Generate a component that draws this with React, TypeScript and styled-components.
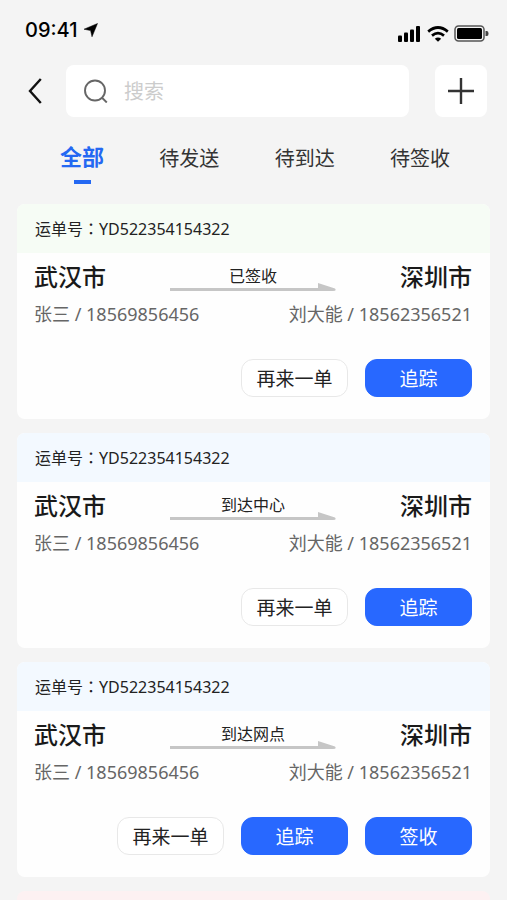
import React, { useState } from "react";
import styled, { createGlobalStyle } from "styled-components";

const GlobalStyle = createGlobalStyle`
  *, *::before, *::after { box-sizing: border-box; }
  body {
    margin: 0;
    background: #f4f4f4;
    color: #222;
    font-family: "Noto Sans", "Noto Sans CJK SC", sans-serif;
  }
  button, input { font: inherit; color: inherit; }
  button { cursor: pointer; border: 0; background: none; padding: 0; }
`;

const Screen = styled.div`
  height: 100vh;
  overflow: hidden;
  display: flex;
  flex-direction: column;
  background: #f4f4f4;
`;

const StatusBar = styled.div`
  flex: none;
  display: flex;
  align-items: center;
  justify-content: space-between;
  height: 65px;
  padding: 0 18px 5px 25px;
`;

const Clock = styled.div`
  display: flex;
  align-items: center;
  gap: 7px;
  font-family: Inter, sans-serif;
  font-size: 20px;
  line-height: 24px;
  font-weight: 500;
  color: #000;
`;

const Indicators = styled.div`
  display: flex;
  align-items: center;
  gap: 5px;
  padding-top: 7px;
`;

const SearchRow = styled.header`
  flex: none;
  display: flex;
  align-items: center;
  padding: 0 20px 0 17px;
`;

const BackButton = styled.button`
  display: flex;
  align-items: center;
  justify-content: center;
  width: 36px;
  height: 52px;
  margin-right: 13px;
`;

const SearchField = styled.label`
  flex: 1;
  min-width: 0;
  display: flex;
  align-items: center;
  gap: 16px;
  height: 52px;
  padding: 0 18px;
  border-radius: 8px;
  background: #fff;
`;

const SearchInput = styled.input`
  flex: 1;
  min-width: 0;
  padding: 2px 0 0;
  border: 0;
  outline: 0;
  background: transparent;
  font-size: 20px;
  line-height: 28px;
  &::placeholder { color: #ccc; opacity: 1; }
`;

const AddButton = styled.button`
  display: flex;
  align-items: center;
  justify-content: center;
  width: 52px;
  height: 52px;
  margin-left: 26px;
  border-radius: 8px;
  background: #fff;
`;

const Tabs = styled.nav`
  flex: none;
  display: flex;
  justify-content: space-between;
  padding: 23px 57px 20px 60px;
`;

const Tab = styled.button<{ $active: boolean }>`
  display: flex;
  flex-direction: column;
  align-items: center;
  justify-content: space-between;
  height: 44px;
  font-size: ${(p) => (p.$active ? 22 : 20)}px;
  font-weight: ${(p) => (p.$active ? 700 : 400)};
  line-height: ${(p) => (p.$active ? 32 : 38)}px;
  color: ${(p) => (p.$active ? "#2468f2" : "#333")};
  &::after {
    content: "";
    width: 17px;
    height: 4px;
    background: ${(p) => (p.$active ? "#2468f2" : "transparent")};
  }
`;

const List = styled.main`
  flex: 1;
  min-height: 0;
  overflow: hidden;
  display: flex;
  flex-direction: column;
  gap: 14px;
  padding: 0 17px;
`;

const Card = styled.article`
  flex: none;
  overflow: hidden;
  border-radius: 8px;
  background: #fefefe;
`;

const tones = { green: "#f6fcf5", blue: "#f3f9ff", red: "#fdf1f2" };
type Tone = keyof typeof tones;

const CardHeader = styled.div<{ $tone: Tone }>`
  height: 49px;
  padding: 12px 17px 0 18px;
  font-size: 16px;
  line-height: 24px;
  background: ${(p) => tones[p.$tone]};
`;

const Colon = styled.span`
  font-family: "Noto Sans CJK TC", sans-serif;
`;

const CardBody = styled.div`
  padding: 6px 18px 22px 17px;
`;

const Route = styled.div`
  display: flex;
  align-items: center;
  justify-content: space-between;
`;

const City = styled.strong`
  font-size: 24px;
  line-height: 36px;
  font-weight: 500;
  color: #1a1a1a;
`;

const Progress = styled.div`
  width: 166px;
  display: flex;
  flex-direction: column;
  align-items: center;
  font-size: 16px;
  line-height: 24px;
  svg { display: block; margin-top: -5px; }
`;

const Contacts = styled.div`
  display: flex;
  justify-content: space-between;
  padding-top: 5px;
  font-size: 18px;
  line-height: 28px;
  color: #666;
`;

const Actions = styled.div`
  display: flex;
  justify-content: flex-end;
  gap: 17px;
  padding-top: 31px;
`;

const ActionButton = styled.button<{ $primary: boolean }>`
  width: 107px;
  height: 38px;
  padding-top: 1px;
  border: 1px solid ${(p) => (p.$primary ? "#2868ff" : "#e8e8e8")};
  border-radius: 12px;
  font-size: 19px;
  line-height: 28px;
  background: ${(p) => (p.$primary ? "#2868ff" : "#fff")};
  color: ${(p) => (p.$primary ? "#fff" : "#222")};
`;

type Shipment = { id: number; tone: Tone; status: string; actions: string[] };

const shipments: Shipment[] = [
  { id: 1, tone: "green", status: "已签收", actions: ["再来一单", "追踪"] },
  { id: 2, tone: "blue", status: "到达中心", actions: ["再来一单", "追踪"] },
  { id: 3, tone: "blue", status: "到达网点", actions: ["再来一单", "追踪", "签收"] },
];

const tabs = ["全部", "待发送", "待到达", "待签收"];

function ShipmentCard({ tone, status, actions }: Shipment) {
  return (
    <Card>
      <CardHeader $tone={tone}>
        运单号<Colon>：</Colon>YD522354154322
      </CardHeader>
      <CardBody>
        <Route>
          <City>武汉市</City>
          <Progress>
            {status}
            <svg width="166" height="8" viewBox="0 0 166 8" aria-hidden="true">
              <path d="M0 5H148V0L165 5.5Q167 8 163 8H0Z" fill="#c6c6c6" />
            </svg>
          </Progress>
          <City>深圳市</City>
        </Route>
        <Contacts>
          <span>张三 / 18569856456</span>
          <span>刘大能 / 18562356521</span>
        </Contacts>
        <Actions>
          {actions.map((a) => (
            <ActionButton key={a} type="button" $primary={a !== "再来一单"}>
              {a}
            </ActionButton>
          ))}
        </Actions>
      </CardBody>
    </Card>
  );
}

export default function App() {
  const [active, setActive] = useState(tabs[0]);
  return (
    <>
      <GlobalStyle />
      <Screen>
        <StatusBar>
          <Clock>
            09:41
            <svg width="14" height="14" viewBox="0 0 14 14" aria-hidden="true">
              <path d="M13.5 .5L0 6.2L6.6 7.6L8 13.8Z" fill="#000" stroke="#000" strokeWidth=".5" />
            </svg>
          </Clock>
          <Indicators>
            <svg width="24" height="17" viewBox="0 0 24 17" aria-hidden="true">
              <rect x="0" y="10.5" width="4" height="6.5" rx="1" />
              <rect x="6" y="7.5" width="4" height="9.5" rx="1" />
              <rect x="12" y="4.5" width="4" height="12.5" rx="1" />
              <rect x="18" y="1" width="4" height="16" rx="1" />
            </svg>
            <svg width="22" height="16" viewBox="0 0 22 16" fill="none" stroke="#000" strokeWidth="2.7" aria-hidden="true">
              <path d="M1.2 5.6Q11-2.6 20.8 5.6M5 9.6Q11 4.6 17 9.6" />
              <path d="M7.8 12.7Q11 10.2 14.2 12.7L11 15.8Z" fill="#000" stroke="none" />
            </svg>
            <svg width="35" height="17" viewBox="0 0 35 17" aria-hidden="true">
              <rect x="1" y="1" width="29" height="15" rx="3.5" fill="none" stroke="#555" strokeWidth="1.5" />
              <rect x="3" y="3" width="25" height="11" rx="1.5" />
              <path d="M31.5 6H33Q34.5 6 34.5 8.5T33 11H31.5Z" fill="#444" />
            </svg>
          </Indicators>
        </StatusBar>

        <SearchRow>
          <BackButton type="button" aria-label="返回">
            <svg width="14" height="26" viewBox="0 0 14 26" fill="none" stroke="#111" strokeWidth="2.4" aria-hidden="true">
              <path d="M12.8 1L2 13L12.8 25" />
            </svg>
          </BackButton>
          <SearchField>
            <svg width="24" height="24" viewBox="0 0 24 24" fill="none" stroke="#666" strokeWidth="1.9" aria-hidden="true">
              <circle cx="11" cy="11.5" r="10" />
              <path d="M17.8 18.5L22.8 23.5" />
            </svg>
            <SearchInput type="text" placeholder="搜索" aria-label="搜索" />
          </SearchField>
          <AddButton type="button" aria-label="添加">
            <svg width="26" height="26" viewBox="0 0 26 26" stroke="#333" strokeWidth="2.4" aria-hidden="true">
              <path d="M13 0V26M0 13H26" />
            </svg>
          </AddButton>
        </SearchRow>

        <Tabs>
          {tabs.map((t) => (
            <Tab key={t} type="button" $active={t === active} onClick={() => setActive(t)}>
              {t}
            </Tab>
          ))}
        </Tabs>

        <List>
          {shipments.map((s) => (
            <ShipmentCard key={s.id} {...s} />
          ))}
          <Card>
            <CardHeader $tone="red" />
          </Card>
        </List>
      </Screen>
    </>
  );
}
